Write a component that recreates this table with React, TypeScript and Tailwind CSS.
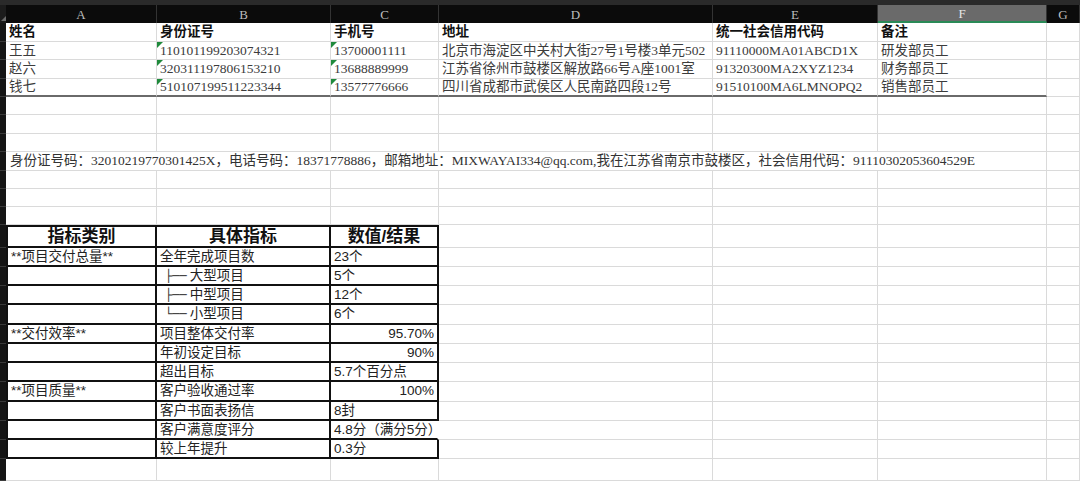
import React from "react";
import clsx from "clsx";
import { twMerge } from "tailwind-merge";

const COLW = ["w-[151px]", "w-[174px]", "w-[108px]", "w-[274px]", "w-[165px]", "w-[169px]", "w-[33px]"];
const LETTERS = ["A", "B", "C", "D", "E", "F", "G"];

const serif = "font-['Liberation_Serif','Noto_Sans_CJK_SC',serif]";
const sans = "font-['Liberation_Sans','Noto_Sans_CJK_SC',sans-serif]";

const people = [
    ["王五", "110101199203074321", "13700001111", "北京市海淀区中关村大街27号1号楼3单元502", "91110000MA01ABCD1X", "研发部员工"],
    ["赵六", "320311197806153210", "13688889999", "江苏省徐州市鼓楼区解放路66号A座1001室", "91320300MA2XYZ1234", "财务部员工"],
    ["钱七", "510107199511223344", "13577776666", "四川省成都市武侯区人民南路四段12号", "91510100MA6LMNOPQ2", "销售部员工"],
];

const metrics: { cat?: string; name: string; tree?: string; value: string; right?: boolean; h: string }[] = [
    { cat: "**项目交付总量**", name: "全年完成项目数", value: "23个", h: "h-[19px]" },
    { name: "大型项目", tree: "├──", value: "5个", h: "h-[19px]" },
    { name: "中型项目", tree: "├──", value: "12个", h: "h-[19px]" },
    { name: "小型项目", tree: "└──", value: "6个", h: "h-[20px]" },
    { cat: "**交付效率**", name: "项目整体交付率", value: "95.70%", right: true, h: "h-[19px]" },
    { name: "年初设定目标", value: "90%", right: true, h: "h-[19px]" },
    { name: "超出目标", value: "5.7个百分点", h: "h-[19px]" },
    { cat: "**项目质量**", name: "客户验收通过率", value: "100%", right: true, h: "h-[20px]" },
    { name: "客户书面表扬信", value: "8封", h: "h-[19px]" },
    { name: "客户满意度评分", value: "4.8分（满分5分）", h: "h-[19px]" },
    { name: "较上年提升", value: "0.3分", h: "h-[19px]" },
];

const Cell = ({ i, className, children }: { i: number; className?: string; children?: React.ReactNode }) => (
    <div
        className={twMerge(
            "relative shrink-0 flex items-center px-[3px] whitespace-nowrap border-r border-b border-[#dadada]",
            COLW[i],
            className
        )}
    >
        {children}
    </div>
);

const Row = ({ h, children }: { h: string; children?: React.ReactNode }) => (
    <div className={clsx("flex", h)}>
        <div className="w-[6px] shrink-0 bg-[#151515] border-b border-[#3a3a3a]" />
        {children}
    </div>
);

const Blank = ({ h, from = 0 }: { h: string; from?: number }) => (
    <Row h={h}>
        {COLW.slice(from).map((_, k) => (
            <Cell key={k} i={k + from} />
        ))}
    </Row>
);

const Tri = () => (
    <div className="absolute top-0 left-0 w-0 h-0 border-t-[6px] border-t-[#1f8a3c] border-r-[6px] border-r-transparent" />
);

export default function App() {
    const tb = "border-[#111] border-r-2 border-b-2";

    return (
        <div className={clsx("w-[1080px] h-[481px] overflow-hidden bg-white text-[13.5px]", serif)}>
            <div className="h-[5px] bg-[#2a2a2a]" />
            {/* column letters */}
            <div className="flex h-[18px] bg-[#0b0b0b]">
                <div className="w-[6px] shrink-0 bg-[#1c1c1c] relative">
                    <div className="absolute bottom-[2px] right-0 w-0 h-0 border-b-[5px] border-b-[#6a6a6a] border-l-[5px] border-l-transparent" />
                </div>
                {LETTERS.map((l, k) => (
                    <div
                        key={l}
                        className={clsx(
                            "shrink-0 flex items-center justify-center text-[13px] leading-none border-r border-[#333]",
                            COLW[k],
                            l === "F" ? "bg-[#6a6a6a] text-[#e6e6e6] border-b-2 border-b-[#2a8a57]" : "text-[#bdbdbd]"
                        )}
                    >
                        {l}
                    </div>
                ))}
            </div>

            {/* people table */}
            <Row h="h-[19px]">
                {["姓名", "身份证号", "手机号", "地址", "统一社会信用代码", "备注"].map((t, k) => (
                    <Cell key={k} i={k} className="font-bold text-[#111] leading-[18px]">
                        {t}
                    </Cell>
                ))}
                <Cell i={6} />
            </Row>
            {people.map((p, r) => (
                <Row key={r} h={r === 1 ? "h-[19px]" : "h-[18px]"}>
                    {p.map((t, k) => (
                        <Cell
                            key={k}
                            i={k}
                            className={clsx("text-[#3c3c3c] leading-[18px]", r === 2 && "border-b-2 border-b-[#6a6a6a]")}
                        >
                            {(k === 1 || k === 2) && <Tri />}
                            {t}
                        </Cell>
                    ))}
                    <Cell i={6} />
                </Row>
            ))}

            <Blank h="h-[18px]" />
            <Blank h="h-[19px]" />
            <Blank h="h-[18px]" />
            <Row h="h-[19px]">
                <div className="w-[1041px] shrink-0 flex items-center pl-[4px] whitespace-nowrap text-[#333] leading-[18px] border-r border-b border-[#dadada]">
                    身份证号码：32010219770301425X，电话号码：18371778886，邮箱地址：MIXWAYAI334@qq.com,我在江苏省南京市鼓楼区，社会信用代码：91110302053604529E
                </div>
                <Cell i={6} />
            </Row>
            <Blank h="h-[18px]" />
            <Blank h="h-[18px]" />
            <Blank h="h-[18px]" />

            {/* metrics table */}
            <div className={sans}>
                <Row h="h-[23px]">
                    {["指标类别", "具体指标", "数值/结果"].map((t, k) => (
                        <Cell
                            key={k}
                            i={k}
                            className={clsx(tb, "border-t-2 justify-center font-bold text-[17px] text-[#111] leading-none", k === 0 && "border-l-2")}
                        >
                            {t}
                        </Cell>
                    ))}
                    {[3, 4, 5, 6].map((k) => (
                        <Cell key={k} i={k} />
                    ))}
                </Row>
                {metrics.map((m, r) => (
                    <Row key={r} h={m.h}>
                        <Cell i={0} className={clsx(tb, "border-l-2 text-[#222] leading-[18px]")}>
                            {m.cat}
                        </Cell>
                        <Cell i={1} className={clsx(tb, "text-[#222] leading-[18px]")}>
                            {m.tree && (
                                <span className="ml-[5px] mr-[3px] font-['DejaVu_Sans'] text-[12px] text-[#333]">{m.tree}</span>
                            )}
                            {m.name}
                        </Cell>
                        <Cell
                            i={2}
                            className={clsx(
                                tb,
                                "text-[#222] leading-[18px] z-10",
                                m.right && "justify-end",
                                r === 9 && "border-r-transparent"
                            )}
                        >
                            {m.value}
                        </Cell>
                        {[3, 4, 5, 6].map((k) => (
                            <Cell key={k} i={k} />
                        ))}
                    </Row>
                ))}
                <Blank h="h-[22px]" />
            </div>
        </div>
    );
}
